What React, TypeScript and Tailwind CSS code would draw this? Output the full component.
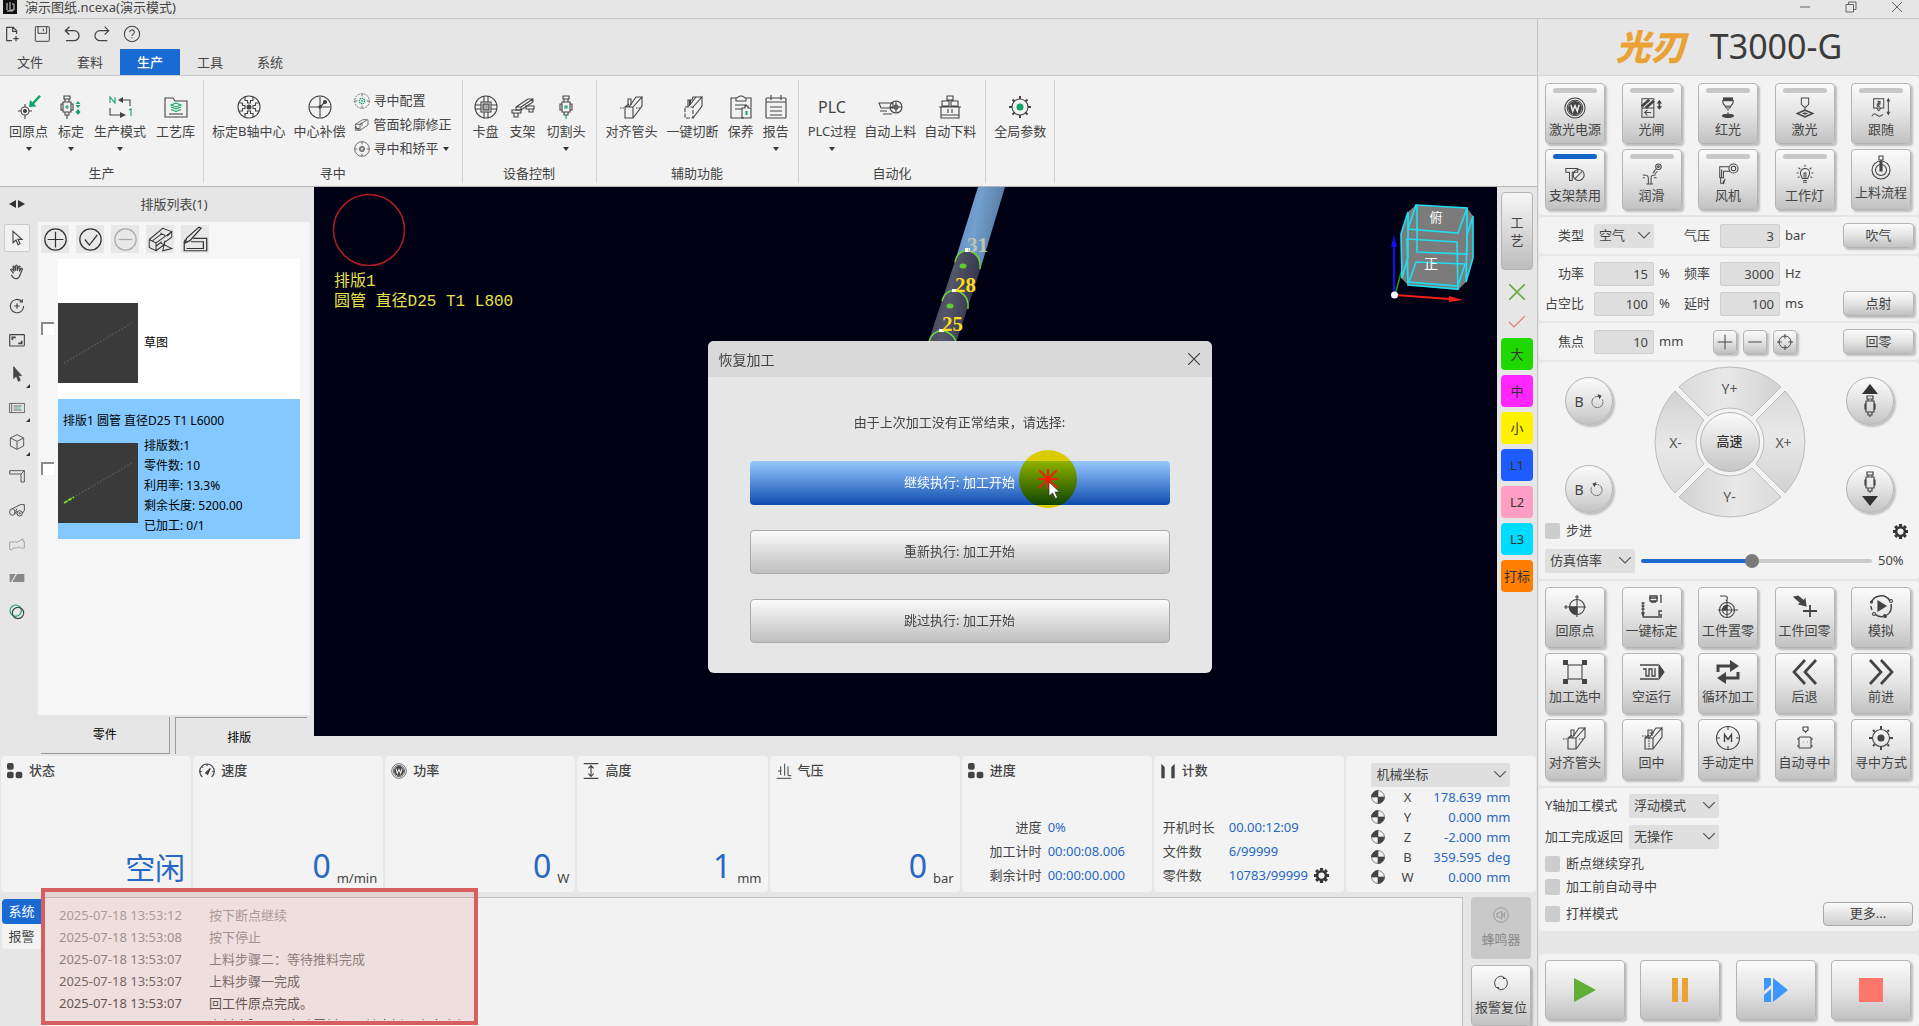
import { useState } from "react";
import type { ReactNode } from "react";
import clsx from "clsx";

const GREEN = "#12a366";

/* Line drawings on a 24 x 24 grid */
const art: Record<string, ReactNode> = {
  newFile: (
    <g strokeWidth="1.8">
      <path d="M12 22H4V2h10l5 5v5M13 2v6h6M18 15v8M14 19h8" />
    </g>
  ),
  save: (
    <g strokeWidth="1.5">
      <rect x="2" y="1" width="21" height="22" rx="1" />
      <path d="M6 1v10h13V1M14 4v4" />
    </g>
  ),
  undo: <path strokeWidth="2" d="M8 1 2 7l6 6M2 7h13a7.500 7.500 0 0 1 0 15H3" />,
  redo: <path strokeWidth="1.8" d="m16 1 6 6-6 6M22 7H9a7.500 7.500 0 0 0 0 15h11" />,
  help: (
    <g strokeWidth="1.6">
      <circle cx="12" cy="12" r="11.500" />
      <path d="M8.500 9.500a3.500 3.500 0 1 1 5 3c-1 .6-1.500 1.200-1.500 2.400M12 17v1.500" />
    </g>
  ),
  home: (
    <>
      <circle cx="8" cy="16" r="4" />
      <circle cx="8" cy="16" r="1.5" fill="currentColor" />
      <path d="M8 9v3M8 20v4M1 16h3M12 16h3" />
      <path d="M12 12l1-7 2.500 2.300L22 0l2 1.500-7 7.500 2.500 2.500z" fill={GREEN} stroke="none" />
    </>
  ),
  calib: (
    <>
      <path d="M5 1h6v3H5zM6 4v3h4V4M4 7h8v10H4zM4 9H2v6h2M12 9h2v6h-2M6 17v3h4v-3M8 20v4" />
      <path d="M8 10v4M6 12h4" stroke={GREEN} />
      <path d="M19 6l2.500 3h-5zM19 13l2.500-3h-5zM19 14l2.500 3h-5zM19 20l2.500-3h-5z" fill={GREEN} stroke="none" />
    </>
  ),
  mode: (
    <>
      <path d="M2 8V2l5 6V2M21 15l2-1v7" stroke={GREEN} />
      <path d="M22 11V5h-8M2 13v7h12" />
      <path d="M15 2v6l-5-3zM12 17v6l6-3z" fill="currentColor" stroke="none" />
    </>
  ),
  lib: (
    <>
      <path d="M1 22V3h8l2 3h12v16z" />
      <path d="M5 19h14" />
      <path d="m12 8-5 2 5 2 5-2zM7 12l5 2 5-2M7 14.500l5 2 5-2" stroke={GREEN} />
    </>
  ),
  axisB: (
    <>
      <circle cx="12" cy="12" r="11" />
      <circle cx="12" cy="12" r="2" fill="currentColor" />
      <path d="M8 1.500v4h2.500V8h3V5.500H16v-4M8 22.500v-4h2.500V16h3v2.500H16v4M1.500 8h4v2.500H8v3H5.500V16h-4M22.500 8h-4v2.500H16v3h2.500V16h4" />
    </>
  ),
  comp: (
    <>
      <circle cx="12" cy="12" r="11" />
      <path d="M12 2v20M2 12h20M12 12l6-6" />
      <circle cx="17" cy="7" r="1.500" fill="currentColor" />
      <circle cx="12" cy="12" r="1.200" fill="currentColor" />
    </>
  ),
  cfg: (
    <>
      <circle cx="12" cy="12" r="11" strokeDasharray="3 1.500" />
      <path d="M12 1v4M12 19v4M1 12h4M19 12h4" />
      <circle cx="12" cy="12" r="4" stroke={GREEN} strokeDasharray="2 1" strokeWidth="2" />
      <circle cx="12" cy="12" r="1" stroke={GREEN} />
    </>
  ),
  contour: (
    <>
      <path d="M2 11h7v9H2zM2 11 13 4h7l-11 7M9 20l12-8V4M9 11l3-2v5" />
      <path d="M3 14a3 3 0 0 0 5 3" strokeWidth="2" />
    </>
  ),
  level: (
    <>
      <circle cx="12" cy="12" r="11" />
      <path d="M12 1v4M12 19v4M1 12h4M19 12h4" />
      <circle cx="12" cy="12" r="4" />
      <path d="M10 10h4v4h-4z" />
    </>
  ),
  chuck: (
    <>
      <circle cx="12" cy="12" r="11" />
      <rect x="7" y="7" width="10" height="10" />
      <path d="M10 1v6M14 1v6M10 17v6M14 17v6M1 10h6M1 14h6M17 10h6M17 14h6" />
      <rect x="9" y="9" width="6" height="6" fill="#aaa" />
    </>
  ),
  bracket: (
    <>
      <path d="M5 12 17 4h5v3L10 15H5zM5 12h5v3M10 12 22 4" />
      <path d="M1 15h9v3H1zM3 18v4h4v-4M15 11h8v3h-8zM18 14v3h4v-3" />
    </>
  ),
  head: (
    <>
      <path d="M9 1h6v3H9zM10 4v3h4V4M8 7h8v10H8zM8 9H6v6h2M16 9h2v6h-2M10 17v3h4v-3" />
      <path d="M11 11h2v2h-2zM12 20v4" stroke={GREEN} />
    </>
  ),
  align: (
    <>
      <path d="M5 12h8v11H5zM5 12l4-3M13 12 22 2v9l-9 12M22 2h-6L9 12" />
      <path d="M8 12V4h3v6" />
      <path d="M0 13h5M16 13h4" strokeDasharray="1.500 1" />
    </>
  ),
  cut: (
    <>
      <path d="M4 12h8v11H4z" strokeDasharray="4 1.500" />
      <path d="M12 12 21 2v9l-9 12M21 2h-6L8 11M7 12V5h4l1-3h3" />
      <path d="M9 5v5" strokeWidth="2" />
    </>
  ),
  center: (
    <>
      <path d="M5 12h8v11H5zM5 12l4-3M13 12 22 2v9l-9 12M22 2h-6L9 12" />
      <path d="M8 12V4h4v6M9.500 7H14" />
      <path d="M2 10h8M9 12v11" strokeDasharray="1.500 1" />
    </>
  ),
  maintain: (
    <>
      <path d="M7 3H2v20h13M17 3h5v9M7 3c2 0 2-2 5-2s3 2 5 2v3H7z" />
      <path d="M6 10h12M6 14h7M13 23V13h3v-2h3v2h3v10z" />
      <path d="M17.500 16v4" stroke={GREEN} strokeWidth="2" />
    </>
  ),
  report: (
    <>
      <rect x="2" y="3" width="20" height="20" rx="1" />
      <path d="M7 0v5M17 0v5M2 7h20M6 12h12M6 16h12M6 20h12" />
    </>
  ),
  feed: (
    <>
      <circle cx="18" cy="12" r="6" />
      <path d="M18 6v12M12 12h12M1 8h14v5H3z" />
      <path d="M2 16h7M5 19h9" />
      <circle cx="18" cy="12" r="2" />
    </>
  ),
  unload: (
    <>
      <path d="M9 1h6v4H9zM4 6h7v5H4zM13 6h7v5h-7zM1 12h22M3 12v11h18V12M3 20h18M10 14v4M14 14v4" />
    </>
  ),
  params: (
    <>
      <circle cx="12" cy="12" r="8" />
      <circle cx="12" cy="12" r="3" fill={GREEN} stroke={GREEN} />
      <path strokeWidth="2" d="M12 1v3M12 20v3M1 12h3M20 12h3M4.500 4.500l2 2M17.500 17.500l2 2M4.500 19.500l2-2M17.500 6.500l2-2" />
    </>
  ),
  /* side tool strip */
  pointer: <path strokeWidth="1.700" d="M6 2v17l4.500-4 3 7 3-1.500-3-6.500h6z" />,
  hand: (
    <path
      strokeWidth="1.700"
      d="M7 14 3 9.500c-1-1.500 1-2.500 2-1.500l3 3-2-6c-.5-2 1.500-2.500 2-1l2 6V3c0-2 2.500-2 2.500 0v7l2-6c.5-1.500 2.500-1 2 1l-1 6 2.500-4c1-1.200 2.500 0 2 1.200L17 15c-1 4-2 7-6 7-3.500 0-6-3-7.500-6"
    />
  ),
  orbit: (
    <g strokeWidth="1.700">
      <path d="M19 5A10 10 0 1 0 22 12M16 6h4V2" />
      <path d="M12 8v8M8 12h8" />
    </g>
  ),
  fit: (
    <g strokeWidth="1.700">
      <rect x="1" y="4" width="22" height="17" rx="1" />
      <path d="M5 12V8h5M19 13v4h-5" strokeWidth="2.500" />
    </g>
  ),
  pointerFill: <path fill="currentColor" d="M7 1v18l4-4 3 8 3-1.500-3-7h5z" />,
  sheet: (
    <>
      <rect x="1" y="5" width="22" height="14" />
      <path d="M4 5v14M7 9h12M7 15h12" />
      <path d="M7 12h10" stroke={GREEN} />
    </>
  ),
  cube: <path strokeWidth="1.300" d="m12 1 10 5v12l-10 5-10-5V6zM2 6l10 5 10-5M12 11v12" />,
  elbow: <path strokeWidth="1.300" d="M1 4h22v17h-5V9H1zM18 9l5-5" />,
  tubes: (
    <g strokeWidth="1.400">
      <ellipse cx="5" cy="15" rx="4" ry="5" />
      <circle cx="16" cy="17" r="4" />
      <path d="M9 15l2 3M5 10 17 4h6v9l-3 4M12 16a4 4 0 0 1 0-6" />
      <circle cx="16" cy="17" r="1" />
    </g>
  ),
  weld: <path strokeWidth="1.300" d="M1 20V9h12l8-5v4h2v10h-6l-2-2-3 2H6l-2 3z" />,
  block: (
    <g stroke="none" fill="#888">
      <path d="M1 6h9L3 18H1zM12 6h11v12H5z" />
    </g>
  ),
  rings: (
    <g strokeWidth="1.700">
      <circle cx="10" cy="10" r="8.500" stroke={GREEN} />
      <circle cx="13.500" cy="13.500" r="8.500" />
    </g>
  ),
  /* list toolbar */
  plusRound: (
    <>
      <circle cx="12" cy="12" r="9.500" />
      <path d="M12 5v14M5 12h14" />
    </>
  ),
  checkRound: (
    <>
      <circle cx="12" cy="12" r="9.500" />
      <path d="m7 12 4 5 7-9" />
    </>
  ),
  minusRound: (
    <>
      <circle cx="12" cy="12" r="9.500" />
      <path d="M6 12h12" />
    </>
  ),
  nest: (
    <path
      strokeWidth=".9"
      d="M2 12 14 2l8 3-4 4M2 12l6 3L22 5v5l-7 5M8 15v7l-6-3v-7M8 22l8-6M12 6c2 3 3 0 4 3M5 13l8-6M12 15l10 5-8 2 2-9M8 18l5-4"
    />
  ),
  edit: (
    <>
      <path d="M10 11h12v11H2V14l1-2" />
      <path d="m3 15 1-4L15 1l2 1L7 13zM4 20h15v-6H8" />
    </>
  ),
  /* control keys */
  power: (
    <>
      <circle cx="12" cy="12" r="11" />
      <circle cx="12" cy="12" r="8.500" />
      <circle cx="12" cy="12" r="7" fill="currentColor" />
      <path d="m7.500 8.500 2 7 2.500-6 2.500 6 2-7" stroke="#eee" strokeWidth="1.600" />
    </>
  ),
  shutter: (
    <>
      <path d="M1 2h13v20H1zM1 12h13" />
      <path d="M1 10 9 3M5 12l9-8" strokeWidth="3" />
      <path d="M4 17h7M7 14l-3 3 3 3" />
      <path d="M20 3l3 4h-2v3h2l-3 4-3-4h2V7h-2z" fill="currentColor" stroke="none" />
    </>
  ),
  red: (
    <>
      <path d="M7 1h10v3H7zM6 4h12c0 3-2 5-3 6H9c-1-1-3-3-3-6zM9 10l1 2h4l1-2" />
      <path d="M8 1.500h8v2H8z" fill="currentColor" />
      <path d="M12 13v6" strokeDasharray="2 1.500" />
      <ellipse cx="12" cy="20.500" rx="6" ry="1.800" fill="currentColor" />
    </>
  ),
  laser: (
    <>
      <path d="M8 1h8v7l-3 3h-2L8 8zM12 11v5" />
      <path d="m3 18 9-4 9 4-9 4z" fill="currentColor" />
      <path d="m7 18 5-2 5 2-5 2z" stroke="#ddd" />
    </>
  ),
  follow: (
    <>
      <path d="M4 2h11v10H4zM7 12l2.500 3 2.500-3M9.500 4v6M8 5h3v2.500H8V10h3" />
      <path d="M20 3v15M18.500 5 20 2l1.500 3M18.500 16l1.500 3 1.500-3M2 21c2-4 4-3 6-1s4 1 6-1" />
    </>
  ),
  bracketOff: (
    <>
      <path d="M2 6h13v4H9v9H6v-9H2z" />
      <circle cx="16" cy="13" r="6" />
      <path d="m12 17 8-8" />
    </>
  ),
  lube: (
    <>
      <path d="m13 11 3-4M15 12l3-3" />
      <circle cx="19" cy="4" r="3" />
      <path d="M2 13c4 0 6 0 6 4v6M16 13c-4 0-5 0-5 4v6M2 16h2M14 16h3M6 23h7" />
      <circle cx="19" cy="4" r="1" />
    </>
  ),
  fan: (
    <>
      <circle cx="18" cy="6" r="5" />
      <circle cx="18" cy="6" r="2.500" />
      <path d="M13 4H3v12h4V9h7M4 16v6h3v-3M9 17l-2 6M5 7v9" />
    </>
  ),
  lamp: (
    <>
      <path d="M9 17c0-2-2-3-2-6a5 5 0 0 1 10 0c0 3-2 4-2 6zM10 19h4M10 21h4M11 16v-5h2v5" />
      <path d="M12 2v2M3 11h2M19 11h2M5 5l2 2M19 5l-2 2M4 16l2-1M20 16l-2-1" />
    </>
  ),
  feedFlow: (
    <>
      <circle cx="12" cy="14" r="9" />
      <circle cx="12" cy="14" r="5.500" />
      <path d="M10 0h4v4h-4zM12 4v9" />
      <path d="M11 6h2v9h-2z" fill="currentColor" />
    </>
  ),
  datum: (
    <>
      <circle cx="14" cy="13" r="7.500" />
      <path d="M14 1v22M1 13h22M3 11v4M12 3h4" />
      <path d="M14 13H6.500a7.500 7.500 0 0 0 7.500 7.500z" fill="currentColor" />
    </>
  ),
  oneKey: (
    <>
      <path d="M10 2h7v5h-7zM9 4h9M11 8h5M21 1v8M20 2l1-1M3 9v11M1.500 9h3M1.500 12h3M1.500 15h3M2 19l1 3 1-3zM3 23h19M22 17h-3v4h3" strokeWidth="1.300" />
    </>
  ),
  setZero: (
    <>
      <circle cx="11" cy="16" r="7.500" />
      <circle cx="11" cy="16" r="4.500" />
      <path d="M11 6v18M2 16h20M4 2h5c3 0 3 3 1 5" />
      <path d="M11 16H6.500a4.500 4.500 0 0 1 4.500-4.500z" fill="currentColor" />
    </>
  ),
  gotoZero: (
    <>
      <path d="M17 11v12M10 17h14" strokeWidth="1.800" />
      <path d="M1 3l4-1 6 5 1-2 1 7-7-2 2-1z" fill="currentColor" />
    </>
  ),
  simulate: (
    <>
      <path d="M2 9A10.500 10.500 0 0 1 21 7M22 10c1 5-1 9-4 11M14 22.500c-3 .5-6-.5-8-2.500M3 16a10 10 0 0 1-1-4" strokeWidth="1.500" />
      <path d="M9 7v10l8-5z" fill="currentColor" />
      <circle cx="22" cy="7" r="1.500" />
      <circle cx="16" cy="22" r="1.500" fill="currentColor" />
      <circle cx="5" cy="20" r="1.500" />
      <circle cx="2.500" cy="8" r="1" fill="currentColor" />
    </>
  ),
  chosen: (
    <>
      <rect x="5" y="5" width="14" height="14" />
      <path fill="currentColor" stroke="none" d="M0 0h5v5H0zM19 0h5v5h-5zM0 19h5v5H0zM19 19h5v5h-5z" />
    </>
  ),
  dryRun: (
    <>
      <path d="M0 5h18M0 19h18" strokeWidth="1.300" />
      <path d="M3 9h3v7h3V9h3v7h3V8" strokeWidth="1.300" />
      <path d="M19 5l5 7-5 7z" fill="currentColor" />
    </>
  ),
  loop: (
    <g strokeWidth="3">
      <path d="M2 12V6h13M22 12v6H9" />
      <path d="M14 0v12l9-6zM10 12v12l-9-6z" fill="currentColor" stroke="none" />
    </g>
  ),
  back: <path strokeWidth="2.700" d="M12 0 1 12l11 12M23 0 12 12l11 12" />,
  forward: <path strokeWidth="2.700" d="m1 0 11 12L1 24M12 0l11 12-11 12" />,
  manual: (
    <>
      <circle cx="12" cy="12" r="11.500" />
      <path d="M12 0v4M12 20v4M0 12h4M20 12h4" />
      <path d="M8.500 16V8.500l3.500 5 3.500-5V16" strokeWidth="1.400" />
    </>
  ),
  autoFind: (
    <>
      <path d="M10 1h5v3l-2.500 2L10 4zM12.500 6v1" />
      <rect x="6" y="11" width="12" height="11" rx="1" />
      <path d="M4 13h2M18 13h2M4 20h2M18 20h2M10 16h.5M14 16h.5" />
    </>
  ),
  findMode: (
    <>
      <circle cx="12" cy="12" r="8.500" />
      <circle cx="12" cy="12" r="3" fill="currentColor" />
      <path strokeWidth="2" d="M12 0v3M12 21v3M0 12h3M21 12h3M4 4l1.500 1.500M18.500 18.500 20 20M4 20l1.500-1.500M18.500 5.500 20 4" />
    </>
  ),
  plus: <path strokeWidth="1.500" d="M12 1v22M1 12h22" />,
  minus: <path strokeWidth="1.500" d="M2 12h20" />,
  target: (
    <g strokeWidth="1.500">
      <circle cx="12" cy="12" r="9" />
      <path d="M12 0v7M12 17v7M0 12h7M17 12h7" />
    </g>
  ),
  cw: (
    <g strokeWidth="1.500">
      <path d="M15 4.500A9.500 9.500 0 1 0 21 9" strokeDasharray="3 1" />
      <path d="M13 0l7 3-4 6z" fill="currentColor" stroke="none" />
    </g>
  ),
  ccw: (
    <g strokeWidth="1.500">
      <path d="M9 4.500A9.500 9.500 0 1 1 3 9" strokeDasharray="3 1" />
      <path d="M11 0 4 3l4 6z" fill="currentColor" stroke="none" />
    </g>
  ),
  gear: (
    <g>
      <circle cx="12" cy="12" r="7" strokeWidth="4" />
      <path strokeWidth="5" d="M12 0v4M12 20v4M0 12h4M20 12h4M3.500 3.500 6 6M18 18l2.500 2.500M3.500 20.500 6 18M18 6l2.500-2.500" />
    </g>
  ),
  /* status cards */
  tiles: (
    <g fill="currentColor" stroke="none">
      <rect x="0" y="0" width="10" height="10" rx="3" />
      <rect x="0" y="13" width="10" height="10" rx="3" />
      <rect x="13" y="13" width="10" height="10" rx="3" />
    </g>
  ),
  gauge: (
    <g strokeWidth="1.700">
      <path d="M5 21A11 11 0 1 1 19 21M12 1v4M1 13h3M20 13h3M4 5l2 2" />
      <path d="m10 15 7-7-4 9z" fill="currentColor" />
    </g>
  ),
  height: <path strokeWidth="1.700" d="M1 1h22M1 23h22M12 4v16M8 8l4-4 4 4M8 16l4 4 4-4" />,
  pressure: <path strokeWidth="1.500" d="M1 23h22M3 12h5M7 5v13M13 1v18M18 5v14h5" />,
  counts: (
    <g fill="currentColor" stroke="none">
      <path d="M2 1l5 5v17H2zM22 1l-5 5v17h5z" />
    </g>
  ),
  quadrant: (
    <>
      <circle cx="12" cy="12" r="11" />
      <path d="M12 12H1A11 11 0 0 1 12 1zM12 12h11a11 11 0 0 1-11 11z" fill="currentColor" />
    </>
  ),
  buzzer: (
    <>
      <circle cx="12" cy="12" r="11" />
      <path d="M6 9v6h3l4 3V6L9 9zM15 9v6M17.500 7v10" />
    </>
  ),
  reset: (
    <g strokeWidth="1.500">
      <path d="M3 15A10 10 0 0 1 14 2M21 9a10 10 0 0 1-11 13M5 19a10 10 0 0 1-2-4M19 5a10 10 0 0 1 2 4" />
      <path d="M14 1l6 5-5 0zM10 23l-6-5 5 0z" fill="currentColor" stroke="none" />
    </g>
  ),
};

function Icon({ name, className = "size-6" }: { name: string; className?: string }) {
  return (
    <svg viewBox="0 0 24 24" fill="none" stroke="currentColor" strokeWidth="1.1" className={clsx("shrink-0 overflow-visible", className)} aria-hidden="true">
      {art[name]}
    </svg>
  );
}

type RibbonEntry = { icon: string; label: string; menu?: boolean };

const ribbonGroups: { title: string; box: string; items: RibbonEntry[]; side?: RibbonEntry[] }[] = [
  {
    title: "生产",
    box: "gap-[10px] pl-[9px] pr-2",
    items: [
      { icon: "home", label: "回原点", menu: true },
      { icon: "calib", label: "标定", menu: true },
      { icon: "mode", label: "生产模式", menu: true },
      { icon: "lib", label: "工艺库" },
    ],
  },
  {
    title: "寻中",
    box: "gap-2 pl-2 pr-[10px]",
    items: [
      { icon: "axisB", label: "标定B轴中心" },
      { icon: "comp", label: "中心补偿" },
    ],
    side: [
      { icon: "cfg", label: "寻中配置" },
      { icon: "contour", label: "管面轮廓修正" },
      { icon: "level", label: "寻中和矫平", menu: true },
    ],
  },
  {
    title: "设备控制",
    box: "gap-[11px] px-[10px]",
    items: [
      { icon: "chuck", label: "卡盘" },
      { icon: "bracket", label: "支架" },
      { icon: "head", label: "切割头", menu: true },
    ],
  },
  {
    title: "辅助功能",
    box: "gap-[9px] px-[9px]",
    items: [
      { icon: "align", label: "对齐管头" },
      { icon: "cut", label: "一键切断" },
      { icon: "maintain", label: "保养" },
      { icon: "report", label: "报告", menu: true },
    ],
  },
  {
    title: "自动化",
    box: "gap-2 px-[9px]",
    items: [
      { icon: "plc", label: "PLC过程", menu: true },
      { icon: "feed", label: "自动上料" },
      { icon: "unload", label: "自动下料" },
    ],
  },
  { title: "", box: "gap-2 px-2", items: [{ icon: "params", label: "全局参数" }] },
];

const tools = [
  { icon: "pointer", label: "选择" },
  { icon: "hand", label: "平移" },
  { icon: "orbit", label: "旋转" },
  { icon: "fit", label: "适应窗口" },
  { icon: "pointerFill", label: "拾取", more: true },
  { icon: "sheet", label: "排样", more: true },
  { icon: "cube", label: "视图", more: true },
  { icon: "elbow", label: "型材" },
  { icon: "tubes", label: "管材" },
  { icon: "weld", label: "焊缝", dim: true },
  { icon: "block", label: "截断" },
  { icon: "rings", label: "偏移" },
];

const layers = [
  { label: "大", color: "bg-[#1fd800]" },
  { label: "中", color: "bg-[#ff26ff]" },
  { label: "小", color: "bg-[#fff200]" },
  { label: "L1", color: "bg-[#1f5cff]" },
  { label: "L2", color: "bg-[#ff9ec4]" },
  { label: "L3", color: "bg-[#00dcff]" },
  { label: "打标", color: "bg-[#ff7d00]" },
];

const deviceKeys = [
  { icon: "power", label: "激光电源", lamp: "off" },
  { icon: "shutter", label: "光闸", lamp: "off" },
  { icon: "red", label: "红光", lamp: "off" },
  { icon: "laser", label: "激光", lamp: "off" },
  { icon: "follow", label: "跟随", lamp: "off" },
  { icon: "bracketOff", label: "支架禁用", lamp: "on" },
  { icon: "lube", label: "润滑", lamp: "off" },
  { icon: "fan", label: "风机", lamp: "off" },
  { icon: "lamp", label: "工作灯", lamp: "off" },
  { icon: "feedFlow", label: "上料流程" },
];

const processKeys = [
  { icon: "datum", label: "回原点" },
  { icon: "oneKey", label: "一键标定" },
  { icon: "setZero", label: "工件置零" },
  { icon: "gotoZero", label: "工件回零" },
  { icon: "simulate", label: "模拟" },
  { icon: "chosen", label: "加工选中" },
  { icon: "dryRun", label: "空运行" },
  { icon: "loop", label: "循环加工" },
  { icon: "back", label: "后退" },
  { icon: "forward", label: "前进" },
  { icon: "align", label: "对齐管头" },
  { icon: "center", label: "回中" },
  { icon: "manual", label: "手动定中" },
  { icon: "autoFind", label: "自动寻中" },
  { icon: "findMode", label: "寻中方式" },
];

const readings = [
  { icon: "tiles", title: "状态", value: "空闲", unit: "" },
  { icon: "gauge", title: "速度", value: "0", unit: "m/min" },
  { icon: "power", title: "功率", value: "0", unit: "W" },
  { icon: "height", title: "高度", value: "1", unit: "mm" },
  { icon: "pressure", title: "气压", value: "0", unit: "bar" },
];

const axes = [
  { axis: "X", value: "178.639", unit: "mm" },
  { axis: "Y", value: "0.000", unit: "mm" },
  { axis: "Z", value: "-2.000", unit: "mm" },
  { axis: "B", value: "359.595", unit: "deg" },
  { axis: "W", value: "0.000", unit: "mm" },
];

const logs = [
  { time: "2025-07-18 13:53:12", text: "按下断点继续", tone: "text-[#a6a6a6]" },
  { time: "2025-07-18 13:53:08", text: "按下停止", tone: "text-[#999999]" },
  { time: "2025-07-18 13:53:07", text: "上料步骤二：等待推料完成", tone: "text-[#858585]" },
  { time: "2025-07-18 13:53:07", text: "上料步骤一完成", tone: "text-[#6b6b6b]" },
  { time: "2025-07-18 13:53:07", text: "回工件原点完成。", tone: "text-[#555555]" },
  { time: "2025-07-18 13:53:07", text: "上料步骤一：自动置料，回转夹抓，上未定报", tone: "text-[#444444]" },
];

const keyFace = "border border-[#b4b4b4] bg-linear-to-b from-[#fbfbfb] via-[#e4e4e4] to-[#c2c2c2] shadow-[2px_2px_2px_rgba(0,0,0,0.22)]";

function RibbonButton({ icon, label, menu }: RibbonEntry) {
  return (
    <button className="flex flex-col items-center">
      {icon === "plc" ? <span className="h-6 text-[16px] leading-6">PLC</span> : <Icon name={icon} />}
      <span className="mt-0.5 text-[13px] leading-5 whitespace-nowrap">{label}</span>
      {menu && <span className="mt-1.5 border-x-3 border-t-4 border-x-transparent border-t-[#333]" />}
    </button>
  );
}

function Ribbon() {
  return (
    <div className="flex h-[111px] shrink-0 border-b border-[#b5b5b5] bg-[#f2f2f2] pt-1 pb-[3px]">
      {ribbonGroups.map((g, i) => (
        <div key={i} className="flex flex-col border-r border-[#d2d2d2]">
          <div className={clsx("flex flex-1 items-start pt-[15px]", g.box)}>
            {g.items.map((it) => (
              <RibbonButton key={it.label} {...it} />
            ))}
            {g.side && (
              <div className="-mt-1 flex flex-col gap-1">
                {g.side.map((it) => (
                  <button key={it.label} className="flex h-5 items-center gap-1 text-[13px] whitespace-nowrap">
                    <Icon name={it.icon} className="size-4" />
                    {it.label}
                    {it.menu && <span className="border-x-3 border-t-4 border-x-transparent border-t-[#333]" />}
                  </button>
                ))}
              </div>
            )}
          </div>
          <div className="h-5 text-center text-[13px] leading-5">{g.title}</div>
        </div>
      ))}
    </div>
  );
}

function Thumb({ cut }: { cut?: boolean }) {
  return (
    <svg viewBox="0 0 80 80" className="size-20 shrink-0 bg-[#3a3a3a]">
      <path d="M6 60 74 20" stroke="#6c6c6c" strokeWidth="1" strokeDasharray="1.5 2" />
      {cut && <path d="M6 60 16 54" stroke="#6fdc2a" strokeWidth="2" strokeDasharray="4 1" />}
    </svg>
  );
}

function NestPanel() {
  return (
    <div className="flex w-[314px] shrink-0">
      <div className="flex w-[38px] flex-col">
        <div className="flex h-[34px] items-center justify-center gap-0.5 pr-1">
          <span className="border-y-4 border-r-7 border-y-transparent border-r-[#333]" />
          <span className="border-y-4 border-l-7 border-y-transparent border-l-[#333]" />
        </div>
        <div className="flex flex-col gap-1.5 pt-[3px] pl-1">
          {tools.map((t, i) => (
            <button
              key={t.icon}
              aria-label={t.label}
              className={clsx("relative flex h-7 w-[26px] items-center justify-center rounded-xs", i === 0 && "border border-[#ccc] bg-[#f2f2f2]", t.dim && "text-[#999]")}
            >
              <Icon name={t.icon} className="size-4" />
              {t.more && <span className="absolute right-0 bottom-0 border-b-4 border-l-4 border-b-[#333] border-l-transparent" />}
            </button>
          ))}
        </div>
      </div>
      <div className="flex w-[272px] flex-col">
        <h2 className="h-[35px] text-center text-[13px] leading-[34px]">排版列表(1)</h2>
        <div className="flex-1 bg-[#f6f6f6]">
          <div className="flex gap-[7px] px-[3px] pt-[3px]">
            {[
              { icon: "plusRound", label: "添加" },
              { icon: "checkRound", label: "全选" },
              { icon: "minusRound", label: "删除", dim: true },
              { icon: "nest", label: "自动排样" },
              { icon: "edit", label: "编辑" },
            ].map((b) => (
              <button key={b.icon} aria-label={b.label} className={clsx("flex size-7 items-center justify-center bg-[#e8e8e8]", b.dim ? "text-[#aaa]" : "text-[#333]")}>
                <Icon name={b.icon} className="size-[27px]" />
              </button>
            ))}
          </div>
          <ul className="mt-[6px] text-[12px] text-black">
            <li className="flex h-[140px] pl-[3px]">
              <input type="checkbox" aria-label="草图" className="mt-[63px] size-[13px] shrink-0 appearance-none border-t-2 border-l-2 border-[#8a8a8a] bg-white" />
              <div className="ml-1 flex w-[242px] bg-white pt-11">
                <Thumb />
                <span className="ml-1.5 leading-[80px]">草图</span>
              </div>
            </li>
            <li className="flex h-[140px] pl-[3px]">
              <input type="checkbox" aria-label="排版1" className="mt-[63px] size-[13px] shrink-0 appearance-none border-t-2 border-l-2 border-[#8a8a8a] bg-white" />
              <div className="ml-1 w-[242px] bg-[#83c9ff] pt-3">
                <p className="pl-[5px] leading-5">排版1 圆管 直径D25 T1 L6000</p>
                <div className="flex pt-[5px]">
                  <div className="pt-[7px]">
                    <Thumb cut />
                  </div>
                  <div className="ml-1.5 leading-5">
                    <p>排版数:1</p>
                    <p>零件数: 10</p>
                    <p>利用率: 13.3%</p>
                    <p>剩余长度: 5200.00</p>
                    <p>已加工: 0/1</p>
                  </div>
                </div>
              </div>
            </li>
          </ul>
        </div>
        <div className="flex h-[41px] gap-[5px] px-[3px] pt-0.5 pb-0.5 text-[12px] text-black">
          <button className="flex-1 border-r border-b border-[#9a9a9a]">零件</button>
          <button className="flex-1 border-t border-l border-[#9a9a9a] pt-1 pr-1">排版</button>
        </div>
      </div>
    </div>
  );
}

function Viewport() {
  return (
    <div className="relative mb-5 flex-1 overflow-hidden bg-[#000014]">
      {/* tube model */}
      <svg className="absolute inset-0 h-full w-full" fontFamily="Liberation Serif, serif" fontWeight="bold" fontSize="21">
        <defs>
          <linearGradient id="stock" x1="0" x2="1" y1="0" y2="0.3">
            <stop offset="0" stopColor="#5f86b8" />
            <stop offset="0.5" stopColor="#739fce" />
            <stop offset="1" stopColor="#55799f" />
          </linearGradient>
          <linearGradient id="part" x1="0" x2="1" y1="0" y2="0.3">
            <stop offset="0" stopColor="#3a3b4e" />
            <stop offset="0.5" stopColor="#555669" />
            <stop offset="1" stopColor="#33344a" />
          </linearGradient>
        </defs>
        <circle cx="55" cy="43" r="35.500" fill="none" stroke="#b01c24" strokeWidth="1.500" />
        <path d="M664 0h27L667 80 641 74z" fill="url(#stock)" />
        <path d="M641 74C644 64 652 62 658 65s9 8 9 15L642 156H614z" fill="url(#part)" />
        <g fill="none" stroke="#6ad83a" strokeWidth="1.500">
          <path d="M641 75C643 64 652 62 658 65s9 8 8 17" />
          <path d="M628 114C631 103 640 102 646 105s9 8 8 17" />
          <path d="M615 155C618 144 627 142 633 145s9 8 9 12" />
        </g>
        <g fill="#5fcf2e">
          <ellipse cx="649" cy="79" rx="3.500" ry="2.500" />
          <ellipse cx="636" cy="119" rx="3.500" ry="2.500" />
        </g>
        <g fill="#fff">
          <rect x="651" y="61" width="5" height="4" />
          <rect x="638" y="102" width="5" height="3" />
          <rect x="625" y="142" width="5" height="3" />
        </g>
        <text x="653" y="65" fill="#b9c4b4">31</text>
        <text x="641" y="105" fill="#ffdc1e">28</text>
        <text x="628" y="144" fill="#ffdc1e">25</text>
      </svg>

      <div className="absolute top-[85px] left-5 font-['Liberation_Mono','Noto_Sans_CJK_SC',monospace] text-[16px] leading-5 text-[#e8e04c]">
        <p>排版1</p>
        <p>圆管 直径D25 T1 L800</p>
      </div>

      {/* orientation cube */}
      <svg viewBox="0 0 90 105" className="absolute top-[13px] right-[17px] h-[105px] w-[90px]" fill="none" fontFamily="Noto Sans CJK SC, sans-serif">
        <path d="M5 95 14 62" stroke="#1f9e1f" strokeWidth="1.500" />
        <path d="M26 5 77 8 83 16V58L76 82 68 90 18 85 11 78V34L18 12z" fill="#7b7b7b" />
        <g stroke="#1fdcf0" strokeWidth="1.700">
          <path d="M26 5 77 8 68 33 18 29zM17 39 67 42 68 89 18 85z" />
          <path d="M26 62 75 64 68 86 19 82zM11 34 18 12V57L12 78zM77 35 83 16V58L76 82z" />
          <path d="M77 8V54L27 52V5" />
        </g>
        <g fill="#fff" textAnchor="middle">
          <text x="46" y="22" fontSize="13">俯</text>
          <text x="41" y="69" fontSize="14">正</text>
        </g>
        <path d="M4 95V46" stroke="#1010f0" strokeWidth="2" />
        <path d="M4 35 7 47H1z" fill="#1010f0" />
        <path d="M5 95 60 99" stroke="#f02018" strokeWidth="2" />
        <path d="M73 100 59 96V102z" fill="#f02018" />
        <circle cx="4.500" cy="95" r="3.500" fill="#fff" />
      </svg>
    </div>
  );
}

function LayerBar() {
  return (
    <div className="flex w-10 shrink-0 flex-col items-center pt-[5px] text-[13px]">
      <button className="flex h-[78px] w-8 flex-col items-center justify-center rounded border border-[#b4b4b4] bg-linear-to-b from-[#f6f6f6] to-[#bdbdbd] leading-[18px]">
        <span>工</span>
        <span>艺</span>
      </button>
      <button aria-label="取消" className="mt-3 h-5">
        <svg viewBox="0 0 16 16" className="size-4" stroke="#6bb04a" strokeWidth="1.800">
          <path d="m0 0 16 16M16 0 0 16" />
        </svg>
      </button>
      <button aria-label="确认" className="mt-2.5 h-5">
        <svg viewBox="0 0 16 16" className="size-4" fill="none" stroke="#e07878" strokeWidth="1.200">
          <path d="m0 8 5 5L16 2" />
        </svg>
      </button>
      <div className="mt-1.5 flex flex-col gap-[5px]">
        {layers.map((l) => (
          <button key={l.label} className={clsx("size-8 rounded pt-0.5 text-[#333]", l.color)}>
            {l.label}
          </button>
        ))}
      </div>
    </div>
  );
}

function CardTitle({ icon, title }: { icon: string; title: string }) {
  return (
    <h3 className="flex h-[22px] items-center gap-1.5 pl-1.5 text-[13px] font-medium">
      <Icon name={icon} className="size-4" />
      {title}
    </h3>
  );
}

function StatusCards() {
  const card = "flex flex-col rounded-sm bg-[#f3f3f3] pt-1 pb-1";
  return (
    <div className="grid h-[136px] shrink-0 grid-cols-8 gap-0.5 px-px">
      {readings.map((r) => (
        <section key={r.title} className={card}>
          <CardTitle icon={r.icon} title={r.title} />
          {r.unit ? (
            <div className="mt-auto flex items-end justify-end gap-1.5 pr-1.5">
              <span className="mb-1.5 text-[32px] leading-8 text-[#2768c4]">{r.value}</span>
              <span className="text-[13px] leading-5">{r.unit}</span>
            </div>
          ) : (
            <div className="mt-auto pr-1.5 text-right text-[30px] leading-10 text-[#2768c4]">{r.value}</div>
          )}
        </section>
      ))}
      <section className={card}>
        <CardTitle icon="tiles" title="进度" />
        <dl className="mt-auto mb-px grid grid-cols-[80px_1fr] gap-x-1.5 text-[13px] leading-6 whitespace-nowrap">
          <dt className="text-right">进度</dt>
          <dd className="text-[#2768c4]">0%</dd>
          <dt className="text-right">加工计时</dt>
          <dd className="text-[#2768c4]">00:00:08.006</dd>
          <dt className="text-right">剩余计时</dt>
          <dd className="text-[#2768c4]">00:00:00.000</dd>
        </dl>
      </section>
      <section className={card}>
        <CardTitle icon="counts" title="计数" />
        <dl className="mt-auto mb-px grid grid-cols-[60px_1fr] gap-x-1.5 pl-[9px] text-[13px] leading-6 whitespace-nowrap">
          <dt>开机时长</dt>
          <dd className="text-[#2768c4]">00.00:12:09</dd>
          <dt>文件数</dt>
          <dd className="text-[#2768c4]">6/99999</dd>
          <dt>零件数</dt>
          <dd className="flex items-center gap-1.5 text-[#2768c4]">
            10783/99999
            <button aria-label="计数设置" className="text-[#333]">
              <Icon name="gear" className="size-[15px]" />
            </button>
          </dd>
        </dl>
      </section>
      <section className={clsx(card, "items-center")}>
        <div className="w-[139px] pt-[3px] text-[13px]">
          <Select label="坐标系" value="机械坐标" className="w-full" />
          <table className="w-full">
            <tbody>
              {axes.map((a) => (
                <tr key={a.axis} className="h-5 leading-5">
                  <td className="w-4">
                    <Icon name="quadrant" className="size-3.5" />
                  </td>
                  <td className="w-10 text-center">{a.axis}</td>
                  <td className="text-right text-[#2768c4]">{a.value}</td>
                  <td className="w-[29px] text-right text-[#2768c4]">{a.unit}</td>
                </tr>
              ))}
            </tbody>
          </table>
        </div>
      </section>
    </div>
  );
}

function LogArea() {
  const [tab, setTab] = useState("系统");
  return (
    <div className="relative mt-[5px] flex h-[129px] shrink-0">
      <div className="flex w-[41px] shrink-0 flex-col pt-0.5 pl-0.5 text-[13px]">
        {["系统", "报警"].map((t) => (
          <button key={t} onClick={() => setTab(t)} className={clsx("h-[25px] rounded-l", t === tab ? "bg-[#1a6ad4] text-white" : "bg-[#f3f3f3]")}>
            {t}
          </button>
        ))}
      </div>
      <div className="flex-1 border-t border-r border-[#c0c0c0] bg-[#f2f2f2]">
        <ul className="h-[122px] overflow-hidden pt-1.5 pl-[18px] text-[13px]">
          {logs.map((l, i) => (
            <li key={i} className={clsx("flex h-[22px] leading-[22px]", l.tone)}>
              <span className="w-[150px]">{l.time}</span>
              <span>{l.text}</span>
            </li>
          ))}
        </ul>
      </div>
      <div className="flex w-[74px] shrink-0 flex-col gap-1.5 pr-1.5 pl-2 text-[13px]">
        <button disabled className="flex h-[62px] flex-col items-center justify-center gap-1.5 rounded bg-[#c9c9c9] text-[#8a8a8a]">
          <Icon name="buzzer" className="size-4" />
          <span className="leading-5">蜂鸣器</span>
        </button>
        <button className={clsx("flex h-[61px] flex-col items-center justify-center gap-1.5 rounded", keyFace)}>
          <Icon name="reset" className="size-4" />
          <span className="leading-5">报警复位</span>
        </button>
      </div>
      <div className="pointer-events-none absolute -top-[9px] bottom-px left-[41px] w-[437px] border-4 border-[#d65f60] bg-[#e05050]/12" />
    </div>
  );
}

function Select({ label, value, className }: { label: string; value: string; className: string }) {
  return (
    <span className={clsx("relative inline-block h-6", className)}>
      <select aria-label={label} defaultValue={value} className="h-full w-full appearance-none rounded-xs bg-[#dfdfdf] pr-5 pl-[5px] text-[13px]">
        <option>{value}</option>
      </select>
      <svg viewBox="0 0 12 7" className="pointer-events-none absolute top-2 right-1 h-[7px] w-3" fill="none" stroke="#555" strokeWidth="1.200">
        <path d="m0 0 6 6 6-6" />
      </svg>
    </span>
  );
}

function Field({ label, value }: { label: string; value: string }) {
  return (
    <input
      type="text"
      aria-label={label}
      defaultValue={value}
      className="ml-2.5 h-6 w-[60px] shrink-0 rounded-xs border border-[#cfcfcf] bg-[#dedede] pr-[5px] text-right"
    />
  );
}

function Key({ icon, label, lamp }: { icon: string; label: string; lamp?: string }) {
  return (
    <button className={clsx("flex h-[61px] w-[60px] flex-col items-center rounded", keyFace, lamp ? "pt-1" : "pt-1.5")}>
      {lamp && <span className={clsx("mb-1 h-[5px] w-11 shrink-0 rounded-full", lamp === "on" ? "bg-[#1565c8]" : "bg-[#c8c8c8]")} />}
      <Icon name={icon} className={lamp ? "size-[22px]" : "size-6"} />
      <span className={clsx("text-[13px] leading-5 whitespace-nowrap", !lamp && "mt-0.5")}>{label}</span>
    </button>
  );
}

function ActionButton({ label }: { label: string }) {
  return <button className={clsx("ml-auto h-[25px] w-[71px] rounded", keyFace)}>{label}</button>;
}

function RoundKey({ label, children }: { label: string; children: ReactNode }) {
  return (
    <button aria-label={label} className={clsx("flex size-12 items-center justify-center rounded-full", keyFace)}>
      {children}
    </button>
  );
}

function HeadMove({ down }: { down?: boolean }) {
  return (
    <svg viewBox="0 0 20 36" className="h-9 w-5" fill="none" stroke="#444" strokeWidth="1.200">
      {down ? <path d="M2 25h16l-8 10z" fill="#333" stroke="none" /> : <path d="M2 11h16L10 1z" fill="#333" stroke="none" />}
      <g transform={down ? "translate(0 -12)" : undefined}>
        <path d="M7 13h6v3H7zM6 18h8v11H6zM6 21H5v5h1M14 21h1v5h-1M8 29v3h4v-3M10 32v2M8 16v2M12 16v2" />
      </g>
    </svg>
  );
}

function JogWheel() {
  const slice = "M24 20A75 75 0 0 1 126 20L97 49A34.500 34.500 0 0 0 53 49Z";
  return (
    <div className="relative grid size-[150px] grid-cols-[42px_66px_42px] grid-rows-[42px_66px_42px] place-items-center text-[14px] text-[#555]">
      <svg viewBox="0 0 150 150" className="absolute inset-0 size-full overflow-visible" stroke="#bcbcbc">
        <defs>
          <linearGradient id="slice" x1="0" x2="1" y1="0" y2="0">
            <stop offset="0" stopColor="#dadada" />
            <stop offset="0.45" stopColor="#e8e8e8" />
            <stop offset="1" stopColor="#d2d2d2" />
          </linearGradient>
        </defs>
        {[0, 90, 180, 270].map((a) => (
          <path key={a} d={slice} fill="url(#slice)" transform={`rotate(${a} 75 75)`} />
        ))}
      </svg>
      <button className="relative col-start-2 size-9">Y+</button>
      <button className="relative col-start-1 row-start-2 size-9">X-</button>
      <button className="relative col-start-2 row-start-2 size-[60px] rounded-full border border-[#b4b4b4] bg-linear-to-b from-[#fafafa] to-[#c6c6c6] text-[13px] font-medium text-[#333]">
        高速
      </button>
      <button className="relative col-start-3 row-start-2 size-9">X+</button>
      <button className="relative col-start-2 row-start-3 size-9">Y-</button>
    </div>
  );
}

function Check({ label }: { label: string }) {
  return (
    <label className="flex h-4 items-center gap-1.5">
      <input type="checkbox" className="h-4 w-[15px] appearance-none rounded-xs bg-[#cdcdcd]" />
      {label}
    </label>
  );
}

function ControlPanel() {
  const panel = "rounded-sm bg-[#f3f3f3] pl-1.5";
  return (
    <aside className="flex w-[382px] shrink-0 flex-col border-l border-[#c4c4c4] pl-px text-[13px]">
      <div className="flex h-[57px] shrink-0 items-center justify-center gap-6 border-b border-[#d6d6d6] pb-0.5">
        <span className="text-[35px] leading-none font-black text-[#eba235] italic">光刃</span>
        <span className="text-[34px] leading-none text-[#3c3c3c]">T3000-G</span>
      </div>

      <div className={clsx(panel, "flex flex-wrap justify-between gap-x-4 gap-y-[5px] pt-[7px] pr-2 pb-[5px]")}>
        {deviceKeys.map((k) => (
          <Key key={k.label} {...k} />
        ))}
      </div>

      <div className={clsx(panel, "mt-0.5 flex h-[37px] items-center pr-[5px]")}>
        <span className="w-[39px] text-right">类型</span>
        <Select label="类型" value="空气" className="ml-2.5 w-[60px]" />
        <span className="w-[30px]" />
        <span>气压</span>
        <Field label="气压" value="3" />
        <span className="pl-[5px]">bar</span>
        <ActionButton label="吹气" />
      </div>

      <div className={clsx(panel, "mt-0.5 flex flex-col gap-[5px] py-[5px] pr-[5px]")}>
        <div className="flex h-[25px] items-center">
          <span className="w-[39px] text-right">功率</span>
          <Field label="功率" value="15" />
          <span className="w-[30px] pl-[5px]">%</span>
          <span>频率</span>
          <Field label="频率" value="3000" />
          <span className="pl-[5px]">Hz</span>
        </div>
        <div className="flex h-[25px] items-center">
          <span className="w-[39px] text-right">占空比</span>
          <Field label="占空比" value="100" />
          <span className="w-[30px] pl-[5px]">%</span>
          <span>延时</span>
          <Field label="延时" value="100" />
          <span className="pl-[5px]">ms</span>
          <ActionButton label="点射" />
        </div>
      </div>

      <div className={clsx(panel, "mt-0.5 flex h-[37px] items-center pr-[5px]")}>
        <span className="w-[39px] text-right">焦点</span>
        <Field label="焦点" value="10" />
        <span className="w-[59px] pl-[5px]">mm</span>
        <div className="flex gap-1.5">
          {[
            { icon: "plus", label: "焦点加" },
            { icon: "minus", label: "焦点减" },
            { icon: "target", label: "焦点定位" },
          ].map((b) => (
            <button key={b.icon} aria-label={b.label} className={clsx("flex size-6 items-center justify-center rounded", keyFace)}>
              <Icon name={b.icon} className="size-4" />
            </button>
          ))}
        </div>
        <ActionButton label="回零" />
      </div>

      <div className={clsx(panel, "mt-0.5 pt-[5px] pr-[5px] pb-1.5")}>
        <div className="flex justify-between px-5">
          <div className="flex flex-col gap-10 pt-2.5">
            <RoundKey label="B轴正转">
              <span className="flex items-center gap-1.5 text-[14px]">
                B <Icon name="cw" className="size-3.5" />
              </span>
            </RoundKey>
            <RoundKey label="B轴反转">
              <span className="flex items-center gap-1.5 text-[14px]">
                B <Icon name="ccw" className="size-3.5" />
              </span>
            </RoundKey>
          </div>
          <JogWheel />
          <div className="flex flex-col gap-10 pt-2.5">
            <RoundKey label="切割头上升">
              <HeadMove />
            </RoundKey>
            <RoundKey label="切割头下降">
              <HeadMove down />
            </RoundKey>
          </div>
        </div>
        <div className="mt-1.5 flex h-4 items-center justify-between pr-1.5">
          <Check label="步进" />
          <button aria-label="点动设置" className="text-[#333]">
            <Icon name="gear" className="size-[15px]" />
          </button>
        </div>
        <div className="mt-2.5 flex items-center gap-1.5">
          <Select label="倍率类型" value="仿真倍率" className="w-[90px]" />
          <input
            type="range"
            aria-label="仿真倍率"
            defaultValue={48}
            className="h-1 flex-1 appearance-none rounded-full bg-[linear-gradient(to_right,#1c6ad0_48%,#cccccc_48%)] [&::-webkit-slider-thumb]:size-3.5 [&::-webkit-slider-thumb]:appearance-none [&::-webkit-slider-thumb]:rounded-full [&::-webkit-slider-thumb]:bg-[#7a7a7a]"
          />
          <span className="w-9">50%</span>
        </div>
      </div>

      <div className={clsx(panel, "mt-0.5 flex flex-wrap justify-between gap-x-4 gap-y-[5px] pt-1.5 pr-2 pb-1.5")}>
        {processKeys.map((k) => (
          <Key key={k.label} {...k} />
        ))}
      </div>

      <div className={clsx(panel, "mt-0.5 h-[143px] pt-1.5 pr-1.5")}>
        <div className="flex h-6 items-center">
          <span className="w-[84px]">Y轴加工模式</span>
          <Select label="Y轴加工模式" value="浮动模式" className="w-[90px]" />
        </div>
        <div className="mt-[7px] flex h-6 items-center">
          <span className="w-[84px]">加工完成返回</span>
          <Select label="加工完成返回" value="无操作" className="w-[90px]" />
        </div>
        <div className="mt-[7px] flex flex-col gap-[7px]">
          <Check label="断点继续穿孔" />
          <Check label="加工前自动寻中" />
        </div>
        <div className="mt-[7px] flex h-6 items-center justify-between">
          <Check label="打样模式" />
          <button className="h-6 w-[90px] rounded border border-[#a9a9a9] bg-linear-to-b from-[#fbfbfb] to-[#cfcfcf]">更多...</button>
        </div>
      </div>

      <div className="mt-auto flex h-[72px] shrink-0 items-start justify-between rounded-sm bg-[#f3f3f3] pt-1.5 pr-2 pl-1.5">
        <button aria-label="开始" className={clsx("flex h-[60px] w-20 items-center justify-center rounded", keyFace)}>
          <svg viewBox="0 0 24 24" className="size-6">
            <path d="M1 0v24l22-12z" fill="#5fae35" />
          </svg>
        </button>
        <button aria-label="暂停" className={clsx("flex h-[60px] w-20 items-center justify-center rounded", keyFace)}>
          <svg viewBox="0 0 24 24" className="size-6">
            <path d="M4 0h6v24H4zM14 0h6v24h-6z" fill="#eba235" />
          </svg>
        </button>
        <button aria-label="断点继续" className={clsx("flex h-[60px] w-20 items-center justify-center rounded", keyFace)}>
          <svg viewBox="0 0 24 24" className="size-6">
            <path d="M0 0h7v7L0 13zM7 11v13H0v-7zM9 0v24l15-12z" fill="#3b96ff" />
          </svg>
        </button>
        <button aria-label="停止" className={clsx("flex h-[60px] w-20 items-center justify-center rounded", keyFace)}>
          <span className="size-6 bg-[#ff776b]" />
        </button>
      </div>
    </aside>
  );
}

function ResumeDialog() {
  const plain = "h-11 rounded border border-[#ababab] bg-linear-to-b from-[#fbfbfb] to-[#bfbfbf]";
  return (
    <div className="fixed inset-0 flex items-center justify-center pb-3">
      <div role="dialog" aria-labelledby="resume-title" className="w-[504px] overflow-hidden rounded-md bg-[#e6e6e6]">
        <div className="flex h-9 items-center justify-between bg-[#d9d9d9] pr-3 pl-[11px]">
          <h2 id="resume-title" className="text-[14px]">恢复加工</h2>
          <button aria-label="关闭">
            <svg viewBox="0 0 12 12" className="size-3" stroke="#444" strokeWidth="1.200">
              <path d="m0 0 12 12M12 0 0 12" />
            </svg>
          </button>
        </div>
        <div className="px-[42px] pt-[35px] pb-[30px] text-[13px]">
          <p className="text-center leading-5">由于上次加工没有正常结束，请选择:</p>
          <div className="mt-[29px] flex flex-col gap-[25px]">
            <button className="relative h-11 rounded bg-linear-to-b from-[#97c9ff] to-[#0c4cae] text-white">
              继续执行: 加工开始
              {/* click highlight with the mouse pointer */}
              <span className="absolute -top-[11px] left-[269px] size-[58px] rounded-full bg-[#f2e300] mix-blend-multiply" />
              <svg viewBox="0 0 58 58" className="absolute -top-[11px] left-[269px] size-[58px]">
                <path d="M29 19v20M19 29h20M20 20l18 18M38 20 20 38" stroke="#e02a08" strokeWidth="2" />
                <circle cx="29" cy="29" r="3" fill="#ff1800" />
                <path d="M30 32v14l3.500-3 3 5.500 2-1-2.500-5.500h4.500z" fill="#fff" stroke="#222" strokeWidth=".6" />
              </svg>
            </button>
            <button className={plain}>重新执行: 加工开始</button>
            <button className={plain}>跳过执行: 加工开始</button>
          </div>
        </div>
      </div>
    </div>
  );
}

export default function App() {
  const [menu, setMenu] = useState("生产");

  return (
    <div className="flex h-screen flex-col overflow-hidden bg-[#e6e6e6] font-['Noto_Sans','Noto_Sans_CJK_SC',sans-serif] text-[#444]">
      <div className="flex h-[19px] shrink-0 items-center border-b border-[#c9c9c9] text-[13px] leading-none">
        <svg viewBox="0 0 14 14" className="mb-1 ml-[3px] size-3.5">
          <path d="M0 0h14v14H0z" fill="#111" />
          <path d="M4 3v7M7 2v9M9 4h2v6H8M4 11h6" stroke="#ddd" fill="none" />
        </svg>
        <span className="ml-2 pb-[3px]">演示图纸.ncexa(演示模式)</span>
        <div className="ml-auto flex items-center gap-9 pr-[17px] pb-1 text-[#666]">
          <button aria-label="最小化">
            <svg viewBox="0 0 10 10" className="size-2.5" stroke="currentColor">
              <path d="M0 5h10" />
            </svg>
          </button>
          <button aria-label="还原">
            <svg viewBox="0 0 10 10" className="size-2.5 overflow-visible" fill="none" stroke="currentColor">
              <path d="M0 2.500h7.500V10H0zM2.500 2.500V0H10v7.500H7.500" />
            </svg>
          </button>
          <button aria-label="关闭窗口">
            <svg viewBox="0 0 10 10" className="size-2.5" stroke="currentColor">
              <path d="m0 0 10 10M10 0 0 10" />
            </svg>
          </button>
        </div>
      </div>

      <div className="flex min-h-0 flex-1">
        <main className="flex min-w-0 flex-1 flex-col">
          <div className="flex h-[30px] shrink-0 items-center gap-3.5 pl-1">
            {[
              { icon: "newFile", label: "新建" },
              { icon: "save", label: "保存" },
              { icon: "undo", label: "撤销" },
              { icon: "redo", label: "重做" },
              { icon: "help", label: "帮助" },
            ].map((b) => (
              <button key={b.icon} aria-label={b.label}>
                <Icon name={b.icon} className="size-4" />
              </button>
            ))}
          </div>
          <nav className="flex h-[27px] shrink-0 border-b border-[#c9c9c9] text-[13px]">
            {["文件", "套料", "生产", "工具", "系统"].map((m) => (
              <button key={m} onClick={() => setMenu(m)} className={clsx("w-[60px] pt-0.5", m === menu && "bg-[#1a6ad4] font-medium text-white")}>
                {m}
              </button>
            ))}
          </nav>
          <Ribbon />
          <div className="flex min-h-0 flex-1">
            <NestPanel />
            <Viewport />
            <LayerBar />
          </div>
          <StatusCards />
          <LogArea />
        </main>
        <ControlPanel />
      </div>

      <ResumeDialog />
    </div>
  );
}
